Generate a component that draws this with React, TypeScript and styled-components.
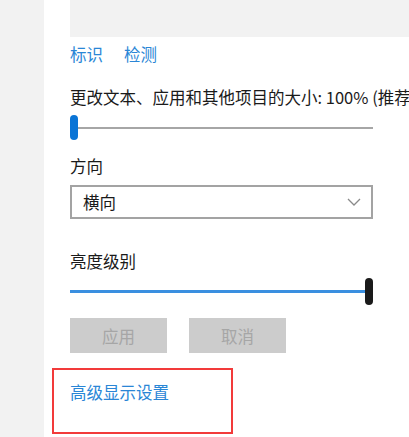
import React from "react";
import styled, { createGlobalStyle } from "styled-components";

const GlobalStyle = createGlobalStyle`
    html, body {
        margin: 0;
        padding: 0;
        background: #ffffff;
    }
    body {
        font-family: "Noto Sans CJK SC", "Noto Sans", sans-serif;
    }
`;

const Page = styled.div`
    display: flex;
    width: 409px;
    height: 437px;
    overflow: hidden;
`;
const Sidebar = styled.div`
    width: 44px;
    flex-shrink: 0;
    background: #f2f2f2;
`;
const Main = styled.div`
    flex: 1;
    padding-left: 26px;
    display: flex;
    flex-direction: column;
    overflow: hidden;
    font-size: 16.5px;
    line-height: 22px;
    color: #1a1a1a;
`;
const Preview = styled.div`
    height: 37px;
    background: #f2f2f2;
    margin-right: -20px;
`;
const LinkRow = styled.div`
    display: flex;
    gap: 21px;
    margin-top: 6px;
`;
const Link = styled.a`
    color: #2a86d6;
    text-decoration: none;
    cursor: pointer;
`;
const Label = styled.div<{ $top: number }>`
    margin-top: ${(p) => p.$top}px;
    white-space: nowrap;
`;
const Slider = styled.div<{ $top: number; $height: number }>`
    position: relative;
    width: 303px;
    height: ${(p) => p.$height}px;
    margin-top: ${(p) => p.$top}px;
    display: flex;
    align-items: center;
`;
const Track = styled.div<{ $color: string; $thick: number }>`
    flex: 1;
    height: ${(p) => p.$thick}px;
    background: ${(p) => p.$color};
`;
const Thumb = styled.div<{ $color: string }>`
    width: 8px;
    height: 100%;
    border-radius: 4px;
    background: ${(p) => p.$color};
    flex-shrink: 0;
`;
const Select = styled.div`
    box-sizing: border-box;
    width: 303px;
    height: 34px;
    margin-top: 8px;
    border: 2px solid #a3a3a3;
    display: flex;
    align-items: center;
    justify-content: space-between;
    padding: 0 10px 0 11px;
`;
const ButtonRow = styled.div`
    display: flex;
    gap: 22px;
    margin-top: 13px;
`;
const Button = styled.div`
    width: 97px;
    height: 35px;
    background: #cccccc;
    color: #a6a6a6;
    display: flex;
    align-items: center;
    justify-content: center;
`;
const Highlight = styled.div`
    box-sizing: border-box;
    width: 181px;
    height: 66px;
    margin-top: 15px;
    margin-left: -18px;
    border: 2px solid #f23a3a;
    padding: 11px 0 0 16px;
`;

const Chevron = () => (
    <svg width="14" height="8" viewBox="0 0 14 8">
        <path d="M1 1 L7 7 L13 1" fill="none" stroke="#8a8a8a" strokeWidth="1.3" />
    </svg>
);

export default function App() {
    return (
        <>
            <GlobalStyle />
            <Page>
                <Sidebar />
                <Main>
                    <Preview />
                    <LinkRow>
                        <Link>标识</Link>
                        <Link>检测</Link>
                    </LinkRow>
                    <Label $top={21}>更改文本、应用和其他项目的大小: 100% (推荐)</Label>
                    <Slider $top={7} $height={25}>
                        <Thumb $color="#0a74d6" />
                        <Track $color="#a6a6a6" $thick={2} />
                    </Slider>
                    <Label $top={15}>方向</Label>
                    <Select>
                        <span>横向</span>
                        <Chevron />
                    </Select>
                    <Label $top={31}>亮度级别</Label>
                    <Slider $top={6} $height={27}>
                        <Track $color="#3a8fe0" $thick={3} />
                        <Thumb $color="#1a1a1a" />
                    </Slider>
                    <ButtonRow>
                        <Button>应用</Button>
                        <Button>取消</Button>
                    </ButtonRow>
                    <Highlight>
                        <Link>高级显示设置</Link>
                    </Highlight>
                </Main>
            </Page>
        </>
    );
}
